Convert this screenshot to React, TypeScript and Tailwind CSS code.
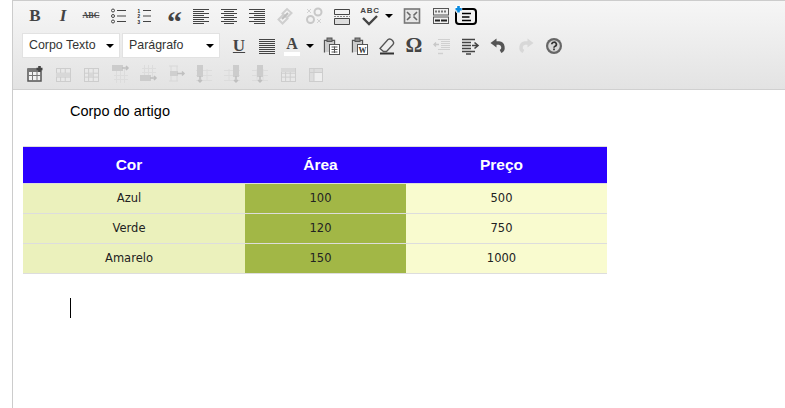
import type { ReactNode } from "react";

const DARK = "#444";
const GHOST = "#cdcdcd";

function Ico({ children, w = 28, size = 20 }: { children: ReactNode; w?: number; size?: number }) {
  return (
    <span className="flex h-5 shrink-0 items-center justify-center" style={{ width: w }}>
      <svg width={size} height={size} viewBox={`0 0 ${size} ${size}`} fill="none" stroke={DARK} strokeWidth="1" className="shrink-0 overflow-visible">
        {children}
      </svg>
    </span>
  );
}

function Lines({ rows, color = DARK }: { rows: [number, number][]; color?: string }) {
  return (
    <>
      {rows.map(([a, b], i) => (
        <path key={i} d={`M${a} ${3.5 + i * 2}H${b}`} stroke={color} />
      ))}
    </>
  );
}

function Arrow() {
  return <span className="mx-[1px] h-0 w-0 shrink-0 border-x-[4px] border-t-[4px] border-x-transparent border-t-black" />;
}

const left: [number, number][] = [[2, 18], [2, 13], [2, 18], [2, 13], [2, 18], [2, 13], [2, 18], [2, 13]];
const center: [number, number][] = [[2, 18], [5, 15], [2, 18], [5, 15], [2, 18], [5, 15], [2, 18], [5, 15]];
const right: [number, number][] = [[2, 18], [7, 18], [2, 18], [7, 18], [2, 18], [7, 18], [2, 18], [7, 18]];
const full: [number, number][] = [[3, 19], [3, 19], [3, 19], [3, 19], [3, 19], [3, 19], [3, 19], [3, 19]];
const outdent: [number, number][] = [[6, 18], [9, 18], [9, 18], [9, 18], [9, 18], [6, 18]];

function Glyph({ children, className }: { children: ReactNode; className: string }) {
  return <span className={`flex h-5 w-[28px] shrink-0 items-center justify-center text-[#444] ${className}`}>{children}</span>;
}

// grid drawn in the faded state, as the table tools are disabled
function Grid({ x, y, w, h }: { x: number; y: number; w: number; h: number }) {
  return (
    <g stroke={GHOST}>
      <rect x={x + 0.5} y={y + 0.5} width={w} height={h} fill="#e8e8e8" />
      <path d={`M${x} ${y + h * 0.4}H${x + w}M${x} ${y + h * 0.7}H${x + w}M${x + w * 0.33} ${y}V${y + h}M${x + w * 0.66} ${y}V${y + h}`} />
    </g>
  );
}

function RowIcon({ below }: { below?: boolean }) {
  return (
    <>
      <path d={below ? "M6.5 1V15M10.5 1V15M14.5 1V15M4 4.5H18M4 8.5H18" : "M6.5 5V19M10.5 5V19M14.5 5V19M4 11.5H18M4 15.5H18"} stroke="#dcdcdc" />
      <rect x="2" y={below ? 11 : 1} width="11" height="6" fill="#cccccc" stroke="none" />
      <path d={below ? "M12 14H18M16 12L18 14L16 16" : "M12 4H18M16 2L18 4L16 6"} stroke="#bfbfbf" strokeWidth="1.5" />
    </>
  );
}

function ColIcon({ at }: { at: number }) {
  return (
    <>
      <path d="M2 6.5H18M2 11.5H18M2 16.5H18M7 5V17M13 5V17" stroke="#dcdcdc" />
      <rect x={at} y="1" width="6" height="12" fill="#cccccc" stroke="none" />
      <path d={`M${at + 3} 12V18M${at + 1} 16L${at + 3} 18L${at + 5} 16`} stroke="#bfbfbf" strokeWidth="1.5" />
    </>
  );
}

function Paste({ children }: { children: ReactNode }) {
  return (
    <>
      <path d="M3.5 16.5V4.5H13.5V8" stroke="#555" strokeWidth="1.3" />
      <path d="M4 5H13V8H8.5V16H4Z" fill="#ccc" stroke="none" />
      <rect x="6" y="2" width="5" height="3.5" fill="#888" stroke="#555" />
      <rect x="8.5" y="8.5" width="10" height="10" fill="#fff" stroke="#555" />
      {children}
    </>
  );
}

function Select({ label }: { label: string }) {
  return (
    <div className="flex h-[25px] w-[98px] shrink-0 items-center justify-between border border-[#e2e2e2] bg-white pl-[6px] pr-[5px] font-['Liberation_Sans',sans-serif] text-[12.4px] text-[#333]">
      <span>{label}</span>
      <span className="h-0 w-0 border-x-[4px] border-t-[4px] border-x-transparent border-t-black" />
    </div>
  );
}

function Toolbar() {
  return (
    <div className="h-[89px] shrink-0 border-b border-[#d0d0d0] bg-gradient-to-b from-[#f6f6f6] to-[#e3e3e3] pl-[8px] pt-[5px]">
      <div className="flex h-5 items-center">
        <Glyph className="font-['Liberation_Serif',serif] text-[17px] font-bold">B</Glyph>
        <Glyph className="font-['Liberation_Serif',serif] text-[17px] font-bold italic">I</Glyph>
        <Glyph className="font-['Liberation_Serif',serif] text-[8px] font-bold line-through">ABC</Glyph>
        <Ico>
          <circle cx="4" cy="4.5" r="1.5" />
          <circle cx="4" cy="10" r="1.5" />
          <circle cx="4" cy="15.5" r="1.5" />
          <path d="M8 4.5H17M8 10H17M8 15.5H17" />
        </Ico>
        <Ico w={26}>
          <text fontSize="4.7" fontWeight="700" fill="#222" stroke="none" fontFamily="Liberation Sans, sans-serif">
            <tspan x="1.5" y="6.5">1</tspan>
            <tspan x="1.5" y="12">2</tspan>
            <tspan x="1.5" y="17.5">3</tspan>
          </text>
          <path d="M7 4.5H15M7 10H15M7 15.5H15" />
        </Ico>
        <Glyph className="pl-[3px] pt-[12px] font-['Liberation_Serif',serif] text-[30px] font-bold leading-none">“</Glyph>
        <Ico><Lines rows={left} /></Ico>
        <Ico><Lines rows={center} /></Ico>
        <Ico w={27}><Lines rows={right} /></Ico>
        <Ico w={29}>
          <path d="M7.5 17.5L3.5 13.5L8.5 8.5L12.5 12.5ZM11.5 11.5L7.5 7.5L12 3L16.5 7L12 11.5" stroke="#cfcfcf" strokeWidth="2" />
          <path d="M7 13L13 7" stroke="#bdbdbd" strokeWidth="2" />
        </Ico>
        <Ico w={29}>
          <circle cx="6.5" cy="13.5" r="3.5" stroke="#c8c8c8" strokeWidth="2" />
          <circle cx="14" cy="6" r="3.5" stroke="#c8c8c8" strokeWidth="2" />
          <path d="M3 3L7 7M7 3L3 7M13 13L17 17M17 13L13 17" stroke="#d2d2d2" />
        </Ico>
        <Ico>
          <path d="M2.5 3.5H17.5V8.5H2.5Z" fill="#f2f2f2" />
          <path d="M2 10.5H18" strokeDasharray="2 1" stroke="#888" />
          <path d="M2.5 12.5H17.5V18.5H2.5Z" fill="#ddd" />
        </Ico>
        <span className="flex w-[28px] shrink-0 flex-col items-center">
          <span className="font-['Liberation_Sans',sans-serif] text-[8px] leading-[8px] font-bold tracking-[0.8px] text-[#444]">ABC</span>
          <svg width="18" height="11" viewBox="0 0 18 11" fill="none" stroke={DARK} strokeWidth="2.4">
            <path d="M2 3L8 9L16 1" />
          </svg>
        </span>
        <Arrow />
        <span className="w-[3px]" />
        <Ico w={30}>
          <rect x="2.5" y="3" width="15" height="14" strokeWidth="1.6" stroke="#777" fill="#e6e6e6" />
          <path d="M5 6L8.5 9.5M15 6L11.5 9.5M5 14L8.5 10.5M15 14L11.5 10.5" strokeWidth="1.6" stroke="#666" />
        </Ico>
        <Ico w={27}>
          <rect x="2.5" y="2.5" width="15" height="6.5" fill="#f0f0f0" stroke="#555" />
          <rect x="2.5" y="11" width="15" height="6.5" fill="#f0f0f0" stroke="#555" />
          <path d="M4 5.5H16" strokeDasharray="2 1" strokeWidth="2" stroke="#777" />
          <path d="M4 14.5H9M10 14.5H16" strokeWidth="2" stroke="#222" />
        </Ico>
        <span className="flex w-[24px] shrink-0 justify-center">
          <svg width="22" height="20" viewBox="0 0 22 20" fill="none" className="shrink-0 overflow-visible">
            <rect x="1" y="3" width="20" height="15" rx="3" stroke="#000" strokeWidth="2" />
            <path d="M7 7.5H16M7 11H14.5M7 14.5H16" stroke="#000" strokeWidth="1.6" />
            <path d="M3.5 -0.5V7M0 3.2H7.2" stroke="#fff" strokeWidth="4.5" />
            <path d="M3.5 0V6.5M0.5 3.2H6.7" stroke="#0a8be0" strokeWidth="2.6" />
          </svg>
        </span>
      </div>
      <div className="ml-[1px] mt-[7px] flex h-[25px] items-center">
        <Select label="Corpo Texto" />
        <span className="w-[2px] shrink-0" />
        <Select label="Parágrafo" />
        <span className="w-[5px] shrink-0" />
        <Glyph className="font-['Liberation_Serif',serif] text-[17px] font-bold underline">U</Glyph>
        <Ico w={26}><Lines rows={full} /></Ico>
        <span className="flex h-[20px] w-[26px] shrink-0 flex-col items-center pt-[1px]">
          <span className="font-['Liberation_Serif',serif] text-[16px] leading-[13px] font-bold text-[#444]">A</span>
          <span className="mt-[2px] h-[4px] w-[16px] bg-white" />
        </span>
        <Arrow />
        <span className="w-[2px] shrink-0" />
        <Ico w={28}>
          <Paste>
            <path d="M10.5 11H16.5M10.5 13.5H16.5M10.5 16H16.5M13.5 10.5V17" stroke="#555" />
          </Paste>
        </Ico>
        <Ico w={28}>
          <Paste>
            <text x="13.5" y="16.5" fontSize="8" fontWeight="700" fill="#333" stroke="none" textAnchor="middle" fontFamily="Liberation Serif, serif">W</text>
          </Paste>
        </Ico>
        <Ico w={27}>
          <path d="M3 12.5L11 3.5C12.5 2.5 14 3 15.5 4.5C16.8 6 17 7.5 16 8.5L9.5 15.5H6.5Z" fill="#eee" stroke="#555" strokeWidth="1.3" />
          <path d="M3 17.5H17" strokeWidth="2" stroke="#333" />
        </Ico>
        <Glyph className="font-['Liberation_Serif',serif] text-[21px] font-bold">Ω</Glyph>
        <Ico>
          <Lines rows={outdent} color="#d0d0d0" />
          <path d="M7 8.5H2M4 6.5L2 8.5L4 10.5" strokeWidth="1.4" stroke="#c8c8c8" />
          <path d="M6 17.5H11" stroke="#d0d0d0" strokeWidth="1.5" />
        </Ico>
        <Ico>
          <path d="M2 3.5H15M2 6.5H11M2 9.5H11M2 12.5H11M2 15.5H15" strokeWidth="1.5" />
          <path d="M6 18H11" strokeWidth="1.5" />
          <path d="M12 9.5H17M14.5 6.5L18 9.5L14.5 12.5" strokeWidth="1.6" />
        </Ico>
        <Ico>
          <path d="M7 7H11a4.5 4.5 0 0 1 1.5 8.5" strokeWidth="3.4" stroke="#555" />
          <path d="M8.5 2.5V11.5L2.5 7Z" fill="#555" stroke="none" />
        </Ico>
        <Ico>
          <path d="M13 7H9a4.5 4.5 0 0 0-1.5 8.5" strokeWidth="3.4" stroke="#d8d8d8" />
          <path d="M11.5 2.5V11.5L17.5 7Z" fill="#d8d8d8" stroke="none" />
        </Ico>
        <Ico>
          <circle cx="10" cy="10" r="8" fill="#666" stroke="none" />
          <circle cx="10" cy="10" r="5.8" fill="#d8d8d8" stroke="none" />
          <path d="M7.8 8.3a2.3 2.1 0 1 1 3.3 1.9c-.8.4-1.1.8-1.1 1.5M10 12.5v1.7" strokeWidth="1.7" stroke="#333" />
        </Ico>
      </div>
      <div className="mt-[6px] flex h-5 items-center">
        <Ico>
          <rect x="3" y="5" width="13" height="12" fill="#f2f2f2" stroke="#555" strokeWidth="1.5" />
          <path d="M3 6.5H14" strokeWidth="3" stroke="#777" />
          <path d="M3 11.5H16M7.5 8V17M12 8V17" stroke="#777" />
          <path d="M14.5 2V8M11.5 5H17.5" strokeWidth="2.6" stroke="#444" />
        </Ico>
        <Ico>
          <Grid x={3} y={4} w={14} h={13} />
          <rect x="3" y="9" width="14" height="4" fill="#d8d8d8" stroke="none" />
        </Ico>
        <Ico>
          <Grid x={3} y={4} w={14} h={13} />
          <rect x="8" y="9" width="4" height="4" fill="#d8d8d8" stroke="none" />
        </Ico>
        <Ico w={29}><RowIcon /></Ico>
        <Ico w={28}><RowIcon below /></Ico>
        <Ico w={28}>
          <path d="M3 2H12M3 17H12M5 2V17M11 2V7M11 12V17" stroke="#d8d8d8" />
          <rect x="4" y="7" width="8" height="5" fill="#cfcfcf" stroke="none" />
          <path d="M11 9.5H18M16 7.5L18 9.5L16 11.5" stroke="#c0c0c0" strokeWidth="1.5" />
        </Ico>
        <Ico w={28}><ColIcon at={3} /></Ico>
        <Ico w={28}><ColIcon at={11} /></Ico>
        <Ico w={27}><ColIcon at={7} /></Ico>
        <Ico w={29}>
          <Grid x={3} y={4} w={14} h={13} />
          <rect x="3" y="4" width="14" height="4" fill="#d8d8d8" stroke="none" />
        </Ico>
        <Ico w={28}>
          <rect x="3.5" y="4.5" width="13" height="13" fill="#ddd" stroke={GHOST} />
          <rect x="8" y="9" width="8" height="8" fill="#eee" stroke="none" />
          <path d="M3.5 8.5H16.5M8 4V17" stroke={GHOST} />
        </Ico>
      </div>
    </div>
  );
}

const rows = [
  ["Azul", "100", "500"],
  ["Verde", "120", "750"],
  ["Amarelo", "150", "1000"],
];

export default function App() {
  return (
    <div className="flex h-[408px] w-[785px] flex-col overflow-hidden bg-white">
      <div className="ml-[12px] flex h-full flex-col border-l border-t border-[#cccccc]">
        <Toolbar />
        <div className="pl-[10px]">
          <p className="ml-[47px] mt-[13px] font-['Liberation_Sans',sans-serif] text-[14.5px] leading-[16px] text-black">Corpo do artigo</p>
          <table className="mt-[27px] w-[584px] table-fixed border-separate border-spacing-0 border-t border-[#dddddd] font-['DejaVu_Sans',sans-serif] text-[11.5px] text-[#222]">
            <thead>
              <tr className="bg-[#2a00ff] font-['Liberation_Sans',sans-serif] text-[15.5px] font-bold text-white">
                <th className="h-[37px] w-[222px] border-b border-[#dddddd] pr-[10px]">Cor</th>
                <th className="h-[37px] w-[161px] border-b border-[#dddddd] pr-[10px]">Área</th>
                <th className="h-[37px] w-[201px] border-b border-[#dddddd] pr-[10px]">Preço</th>
              </tr>
            </thead>
            <tbody>
              {rows.map((r) => (
                <tr key={r[0]} className="text-center">
                  <td className="h-[30px] border-b border-[#dddddd] bg-[#ebf1bc] pr-[10px] pt-[1px]">{r[0]}</td>
                  <td className="h-[30px] border-b border-[#dddddd] bg-[#a2b746] pr-[10px] pt-[1px]">{r[1]}</td>
                  <td className="h-[30px] border-b border-[#dddddd] bg-[#f9fbcf] pr-[10px] pt-[1px]">{r[2]}</td>
                </tr>
              ))}
            </tbody>
          </table>
          <div className="ml-[47px] mt-[24px] h-[20px] w-px bg-black" />
        </div>
      </div>
    </div>
  );
}
